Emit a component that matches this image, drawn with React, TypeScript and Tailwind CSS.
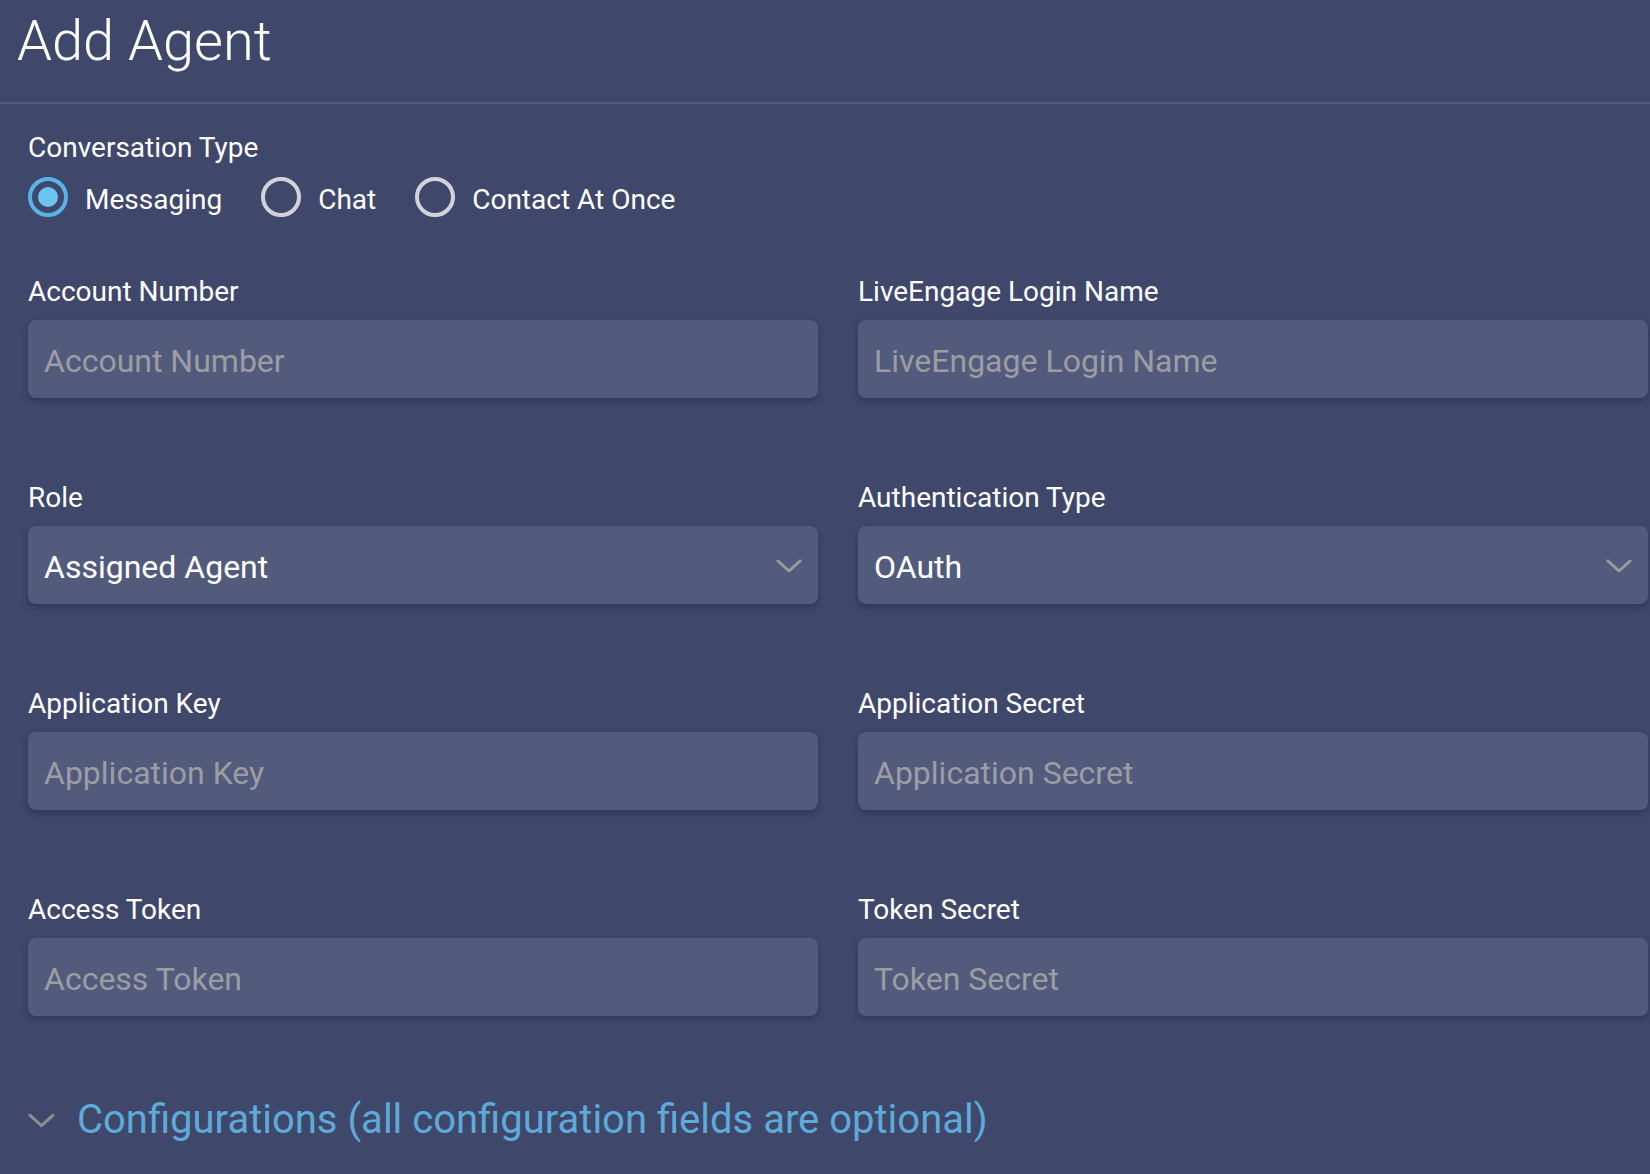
import React from "react";

function Chevron({ className }: { className?: string }) {
  return (
    <svg className={className} viewBox="0 0 26 14" fill="none">
      <polyline points="2,2 13,12 24,2" stroke="currentColor" strokeWidth="3" strokeLinecap="round" strokeLinejoin="round" />
    </svg>
  );
}

function Radio({ checked, label }: { checked?: boolean; label: string }) {
  return (
    <div className="flex items-center gap-[17px]">
      {checked ? (
        <div className="w-[40px] h-[40px] rounded-full border-[4px] border-[#58b3e6] flex items-center justify-center">
          <div className="w-[20px] h-[20px] rounded-full bg-[#6cc4f1]" />
        </div>
      ) : (
        <div className="w-[40px] h-[40px] rounded-full border-[4px] border-[#d2d3da]" />
      )}
      <span className="text-[28px] leading-none text-white mt-[5px]">{label}</span>
    </div>
  );
}

function TextField({ label, placeholder }: { label: string; placeholder: string }) {
  return (
    <div className="flex flex-col gap-[14px]">
      <label className="text-[28px] leading-none text-white">{label}</label>
      <input
        placeholder={placeholder}
        className="w-full h-[78px] rounded-lg bg-[#535b7c] px-4 pt-[4px] text-[32px] text-white placeholder:text-[#9c9da4] outline-none shadow-[0_3px_6px_rgba(20,25,50,0.35)]"
      />
    </div>
  );
}

function SelectField({ label, value }: { label: string; value: string }) {
  return (
    <div className="flex flex-col gap-[14px]">
      <label className="text-[28px] leading-none text-white">{label}</label>
      <div className="w-full h-[78px] rounded-lg bg-[#535b7c] pl-4 pr-4 flex items-center justify-between shadow-[0_3px_6px_rgba(20,25,50,0.35)]">
        <span className="text-[32px] text-white leading-none mt-[4px]">{value}</span>
        <Chevron className="w-[26px] h-[14px] text-[#9b9b9f] mt-[2px]" />
      </div>
    </div>
  );
}

export default function App() {
  return (
    <div className="w-[1650px] h-[1174px] bg-[#3f486b] font-['Roboto',sans-serif] overflow-hidden">
      <div className="pt-[13px] pb-[33px] pl-[17px] border-b-2 border-[#545d80]">
        <h1 className="text-[56px] leading-none font-light text-white">Add Agent</h1>
      </div>
      <div className="pl-[28px] pr-[2px] pt-[30px]">
        <div className="text-[28px] leading-none text-white">Conversation Type</div>
        <div className="flex items-center gap-[39px] mt-[15px]">
          <Radio checked label="Messaging" />
          <Radio label="Chat" />
          <Radio label="Contact At Once" />
        </div>
        <div className="grid grid-cols-2 gap-x-[40px] gap-y-[86px] mt-[61px]">
          <TextField label="Account Number" placeholder="Account Number" />
          <TextField label="LiveEngage Login Name" placeholder="LiveEngage Login Name" />
          <SelectField label="Role" value="Assigned Agent" />
          <SelectField label="Authentication Type" value="OAuth" />
          <TextField label="Application Key" placeholder="Application Key" />
          <TextField label="Application Secret" placeholder="Application Secret" />
          <TextField label="Access Token" placeholder="Access Token" />
          <TextField label="Token Secret" placeholder="Token Secret" />
        </div>
        <div className="flex items-center gap-[22px] mt-[84px]">
          <Chevron className="w-[27px] h-[15px] text-[#8c8d95]" />
          <span className="text-[40px] leading-none text-[#5eaad9]">
            Configurations (all configuration fields are optional)
          </span>
        </div>
      </div>
    </div>
  );
}
